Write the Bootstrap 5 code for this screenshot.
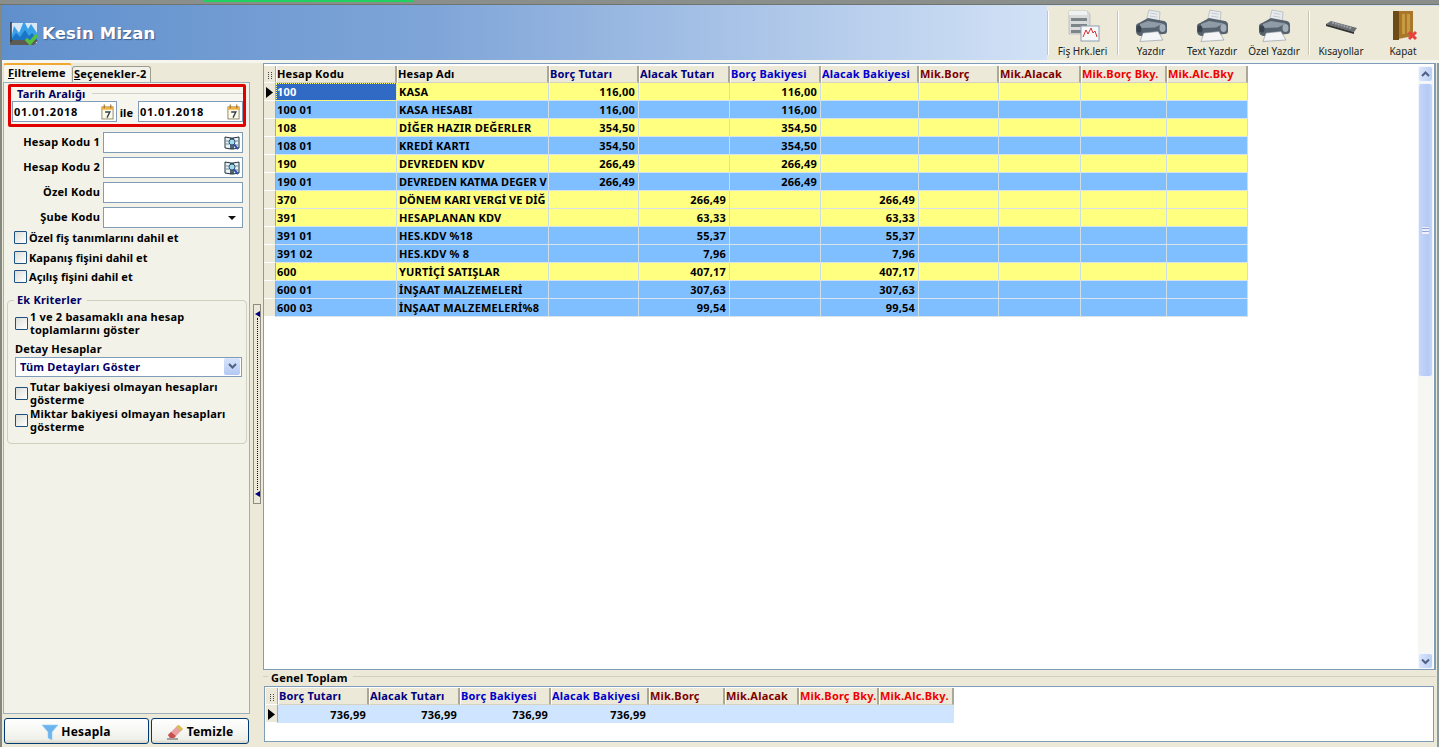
<!DOCTYPE html>
<html lang="tr">
<head>
    <meta charset="UTF-8">
    <meta name="viewport" content="width=device-width, initial-scale=1.0">
    <title>Kesin Mizan</title>
    <link rel="stylesheet" href="https://cdn.jsdelivr.net/npm/bootstrap@5.3.0/dist/css/bootstrap.min.css">
    <script src="https://cdn.jsdelivr.net/npm/bootstrap@5.3.0/dist/js/bootstrap.bundle.min.js" defer></script>
    <style>
        html, body { height: 747px; overflow: hidden; }
        body { background: #ece9d8; color: #000; font: 700 11px/13px "Noto Sans", "DejaVu Sans", sans-serif; letter-spacing: .2px; }
        .app-frame { border-left: 2px solid #84887e; }
        .win-top { height: 5px; background: #8b8f8b; border-bottom: 1px solid #6f7470; flex: none; margin-left: -2px; }
        .win-top i { display: block; width: 210px; height: 2px; margin-left: 203px; background: #20d060; }
        .title-band { height: 55px; flex: none; padding-left: 7px; background: linear-gradient(90deg, #6090cc 0%, #7fa5d8 30%, #d3e2f6 73%); }
        .title-text { color: #fff; font: 700 16.5px/22px "DejaVu Sans", sans-serif; letter-spacing: .2px; margin-left: 3px; margin-top: 3px; text-shadow: 1px 1px 1px #3c5f90; }
        .tool-bar { background: #ece9d8; margin: 1px 0 0; padding: 3px 6px 3px 0; font: 400 10px/12px "Noto Sans", sans-serif; letter-spacing: 0; color: #222; }
        .tool-item { text-align: center; white-space: nowrap; flex: none; }
        .tool-item svg { display: block; margin: 0 auto 3px; }
        .tool-sep { width: 1px; margin: 2px 0; background: #c8c5b2; box-shadow: 1px 0 0 #fff; flex: none; }
        .tool-w1 { width: 69px; }
        .tool-w2 { width: 66px; }
        .tool-w3 { width: 56px; }
        .tool-w4 { width: 68px; }
        .tool-w5 { width: 64px; }
        .tool-w6 { width: 60px; }
        .top-gap { height: 3px; background: #f6f6f0; flex: none; }
        .work-area { flex: 1 1 auto; min-height: 0; padding-left: 1px; border-right: 2px solid #8b9a9c; }
        .left-pane { width: 247px; flex: none; }
        .tab-strip { height: 19px; flex: none; border: 0; padding: 0; }
        .tab-strip .nav-link { font: 700 11px/14px "Noto Sans", sans-serif; color: #000; padding: 0 0 0 1px; border: 1px solid #9c9c90; border-bottom: 0; border-radius: 3px 3px 0 0; background: #f2f1e8; margin: 0; }
        .tab-strip .nav-link.active { height: 19px; width: 69px; border-top: 2px solid #f0a830; background: #f6f5ee; color: #000; text-align: left; padding: 1px 0 0 4px; }
        .tab-strip .nav-item + .nav-item .nav-link { margin-top: 3px; height: 16px; width: 79px; }
        .tab-page { height: 632px; flex: none; border: 1px solid #9cb0bc; background: #f3f2e9; padding: 1px 3px 0 4px; }
        .tab-page u, .tab-strip u { text-decoration: underline; }
        .date-box { border: 3px solid #e00000; margin: 0; background: #f6f5ee; height: 43px; padding: 0 0 0 1px; border-radius: 2px; }
        .group-title { color: #000066; white-space: nowrap; padding-left: 5px; height: 15px; line-height: 14px; margin-top: -1px; }
        .group-title::after { content: ""; flex: 1; margin-left: 6px; border-top: 1px solid #d0d0c4; }
        .fld { display: flex; align-items: center; background: #fff; border: 1px solid #7f9db9; height: 21px; padding-right: 2px; }
        .fld input { border: 0; outline: 0; min-width: 0; flex: 1; background: transparent; padding: 0 1px; font: inherit; color: #000; box-shadow: none; height: 19px; border-radius: 0; }
        .date-fld { width: 105px; flex: none; }
        .date-fld input { letter-spacing: .75px; }
        .ile-text { width: 21px; text-align: center; flex: none; padding-right: 2px; padding-top: 1px; }
        .form-line { height: 21px; margin-bottom: 4px; padding-right: 3px; }
        .form-line label { width: 95px; text-align: right; flex: none; padding-right: 3px; white-space: nowrap; margin-top: 3px; }
        .form-line .fld { flex: 1; }
        .form-first { margin-top: 5px; }
        .check-line { display: flex; align-items: center; gap: 2px; padding-left: 6px; margin: 0; line-height: 13px; }
        .check-line .form-check-input { width: 13px; height: 13px; margin: 0; border: 1px solid #1c5180; border-radius: 1px; background: linear-gradient(135deg, #dcdcd7, #fff); flex: none; box-shadow: none; }
        .check-list { margin-top: -4px; letter-spacing: .05px; }
        .check-list .check-line { height: 19.5px; }
        .extra-box { border: 1px solid #d0d0bf; border-radius: 4px; margin: 13px 0 0 -1px; height: 144px; width: 240px; padding: 9px 0 0 0; position: relative; }
        .extra-box .check-line { min-height: 27px; padding-left: 7px; }
        .extra-title { position: absolute; left: 6px; top: -8px; background: #f3f2e9; padding: 0 5px 0 3px; color: #000066; }
        .detail-label { padding-left: 7px; margin-top: 5px; }
        .detail-fld { margin: 2px 4px 3px 7px; height: 20px; color: #000066; padding: 0 1px 0 4px; justify-content: space-between; }
        .combo-btn { width: 16px; height: 17px; background: linear-gradient(180deg, #d8e4fb, #b3c8f2); border-radius: 2px; display: flex; align-items: center; justify-content: center; }
        .button-row { margin-top: 4px; height: 26px; gap: 2px; margin-left: 1px; }
        .act-btn { font: 700 12px/14px "Noto Sans", sans-serif; color: #000; height: 26px; padding: 1px 0 0; border: 1px solid #003c74; border-radius: 3px; background: linear-gradient(180deg, #fff, #f0f0ea 85%, #d8d4c6); display: flex; align-items: center; justify-content: center; gap: 3px; }
        .act-btn:hover { color: #000; border-color: #003c74; background: #fff; }
        .btn-hesapla { width: 145px; }
        .btn-temizle { width: 98px; }
        .split-col { width: 13px; flex: none; padding: 241px 2px 0 3px; }
        .split-handle { width: 8px; height: 200px; border: 1px solid #8c8c84; padding: 6px 0; align-items: center; justify-content: space-between; display: flex; flex-direction: column; background: #ece9d8; }
        .split-handle b { flex: 1; width: 0; border-left: 1px dotted #000066; margin: 1px 0; }
        .right-pane { width: 1173px; flex: none; }
        .grid-pane { height: 607px; flex: none; background: #fff; border: 1px solid #7f9db9; border-right-width: 2px; padding: 2px 1px 0 0; }
        .data-grid { table-layout: fixed; border-collapse: separate; border-spacing: 0; margin: 0; flex: none; font: 700 11px/13px "Noto Sans", sans-serif; letter-spacing: .2px; }
        .data-grid th, .data-grid td { padding: 0 2px; height: 18px; white-space: nowrap; overflow: hidden; box-shadow: none; vertical-align: middle; color: #000; background: none; border: 0; }
        .data-grid thead th { height: 17px; background: #ece9d8; border-right: 2px solid #aca899; border-left: 1px solid #fff; border-bottom: 1px solid #d6d2c2; padding: 0 0 1px; }
        .data-grid td { border-right: 1px solid #cfdde4; border-bottom: 1px solid #d9e4ea; }
        .data-grid td.cell-num { text-align: right; padding-right: 3px; }
        .data-grid td.cell-mark, .data-grid thead th.cell-mark { background: #ece9d8; border: 0; border-right: 1px solid #aca899; border-bottom: 1px solid #fff; padding: 0; text-align: center; }
        .data-grid td.cell-first { padding-left: 1px; }
        .data-grid td.cell-tight { letter-spacing: 0; }
        .row-y td { background: #ffff80; }
        .row-b td { background: #80bfff; }
        .row-t td { background: #cfe5ff; border: 0; }
        .data-grid td.cell-sel { background: #316ac5; color: #fff; outline: 1px dotted #ffff80; outline-offset: -1px; }
        .c-navy { color: #000080 !important; }
        .c-blue { color: #0000cd !important; }
        .c-maroon { color: #800000 !important; }
        .c-red { color: #f00000 !important; }
        .drag-dots { display: inline-block; width: 4px; height: 7px; border-left: 1px dotted #444; border-right: 1px dotted #444; }
        .v-scroll { width: 15px; flex: none; background: #f6f6f2; }
        .sb-btn { height: 16px; flex: none; background: linear-gradient(90deg, #dbe6fb, #bccff5); border: 1px solid #f4f7fe; border-radius: 3px; display: flex; align-items: center; justify-content: center; }
        .sb-thumb { height: 294px; flex: none; margin-top: 1px; background: linear-gradient(90deg, #c6d6f8, #b4c9f5 70%, #c6d6f8); border: 1px solid #f0f4fe; border-radius: 3px; display: flex; align-items: center; justify-content: center; }
        .sb-thumb span { width: 7px; height: 7px; border-top: 1px solid #eef; border-bottom: 1px solid #eef; background: linear-gradient(#8fa6d8 0 1px, #eef 1px 3px, #8fa6d8 3px 4px, #eef 4px); }
        .total-group { height: 72px; flex: none; position: relative; margin-top: 6px; border-top: 1px solid #d0d0bf; }
        .total-title { position: absolute; left: 5px; top: -6px; background: #ece9d8; padding: 0 5px 0 3px; line-height: 14px; }
        .total-pane { position: relative; height: 56px; margin-top: 9px; margin-left: 1px; margin-right: 2px; background: #fff; border: 1px solid #7f9db9; padding: 1px 0 0 1px; }
    </style>
</head>
<body>
<svg width="0" height="0" class="d-block">
    <defs>
        <symbol id="ic-print" viewBox="0 0 34 33">
            <path d="M15 1l11 2-1 12-13-2z" fill="#e8ecee" stroke="#a0a9b0" stroke-width=".6"/>
            <path d="M16.500 4l7 1.300M16 7l7.500 1.300" stroke="#b9c2c8" stroke-width=".8"/>
            <path d="M5 14l9-5 16 3c2 .5 3 2 3 4v6c0 2-1 3-3 3l-22 2c-4 0-6-2-6-5v-5c0-1.500 1-2.500 3-3z" fill="#56626e"/>
            <path d="M6 15l8-3 15 2.500-8 4-15 .500z" fill="#8f9ca7"/>
            <ellipse cx="28.500" cy="19" rx="3" ry="4" fill="#a3afb8"/>
            <ellipse cx="5" cy="20" rx="2.500" ry="3.500" fill="#39424b"/>
            <path d="M9 24l15-1.500 5 8.500-23 1.500z" fill="#f4f5f6" stroke="#8a949c" stroke-width=".6"/>
        </symbol>
        <symbol id="ic-book" viewBox="0 0 16 16">
            <path d="M1 2l6 1v11l-6-1zM15 2L9 3v11l6-1zM7 3h2v11H7z" fill="#eef2f2" stroke="#1c3440" stroke-width="1"/>
            <path d="M2 6h3M2 9h3M11 6h3M11 10h3" stroke="#6c8aa4" stroke-width="1"/>
            <circle cx="8" cy="7" r="3" fill="#a0dcec" stroke="#2c5070" stroke-width="1"/>
            <path d="M10 9.500l4 4.500" stroke="#3050b0" stroke-width="2"/>
        </symbol>
        <symbol id="ic-cal" viewBox="0 0 14 16">
            <rect x="1" y="2.500" width="12" height="13" fill="#fdfbe8" stroke="#8c8468"/>
            <rect x="1" y="2.500" width="12" height="3" fill="#f0b040"/>
            <path d="M3.500 0v4M10.500 0v4" stroke="#a07020" stroke-width="1.200"/>
            <path d="M4.500 8h5L6.500 14" fill="none" stroke="#304050" stroke-width="1.500"/>
        </symbol>
    </defs>
</svg>

<div class="app-frame d-flex flex-column vh-100">
    <div class="win-top"><i></i></div>

    <div class="title-band d-flex justify-content-between">
        <div class="d-flex align-items-center">
            <svg width="30" height="27" viewBox="0 0 30 27">
                <path d="M2 24V4h26v20z" fill="#dbe7f4"/>
                <path d="M2 20l3-13 5 7 5-12 4 8 3-5 6 9v6H2z" fill="#38a0e8"/>
                <path d="M2 21l5-7 4 4 5-7 4 6 3-3 5 6v3H2z" fill="#1c74c4"/>
                <path d="M1 21v5h24l4-5z" fill="#5c5c54"/>
                <path d="M2 3v20" stroke="#333" stroke-width="1.500"/>
                <path d="M17 20l4 4 7-8" fill="none" stroke="#58c040" stroke-width="3.500"/>
            </svg>
            <div class="title-text">Kesin Mizan</div>
        </div>
        <div class="tool-bar d-flex">
            <div class="tool-sep"></div>
            <div class="tool-item tool-w1">
                <svg width="34" height="33" viewBox="0 0 34 33">
                    <path d="M3 2h18l3 3v20H3z" fill="#d8dadc" stroke="#aab0b4" stroke-width=".6"/>
                    <path d="M3 2h18v4H3z" fill="#f0f1f2"/>
                    <path d="M5 9h16v3H5zM5 15h16v3H5zM5 21h16v3H5z" fill="#7c8488"/>
                    <rect x="15" y="17" width="18" height="15" fill="#f6f8fa" stroke="#8fa0b0"/>
                    <path d="M17 28l3-7 2 4 3-6 2 5 2-2 2 6" fill="none" stroke="#d83030"/>
                </svg>
                Fiş Hrk.leri
            </div>
            <div class="tool-sep"></div>
            <div class="tool-item tool-w2"><svg width="34" height="33"><use href="#ic-print"/></svg>Yazdır</div>
            <div class="tool-item tool-w3"><svg width="34" height="33"><use href="#ic-print"/></svg>Text Yazdır</div>
            <div class="tool-item tool-w4"><svg width="34" height="33"><use href="#ic-print"/></svg>Özel Yazdır</div>
            <div class="tool-sep"></div>
            <div class="tool-item tool-w5">
                <svg width="34" height="33" viewBox="0 0 34 33">
                    <path d="M2 15l5-3 26 7-3 4z" fill="#6a6e72"/>
                    <path d="M2 15l28 8v2L2 17z" fill="#303234"/>
                    <path d="M8 13.500l20 6" stroke="#a0a4a8" stroke-width="2" stroke-dasharray="2 1"/>
                </svg>
                Kısayollar
            </div>
            <div class="tool-item tool-w6">
                <svg width="34" height="33" viewBox="0 0 34 33">
                    <path d="M7 2h20v25l-20 4z" fill="#a87828"/>
                    <path d="M7 2h6v29H7z" fill="#6e4a14"/>
                    <path d="M16 5h3v20h-3zM21 5h3v19h-3z" fill="#c89a44"/>
                    <path d="M23 23l7 7M30 23l-7 7" stroke="#e84040" stroke-width="3"/>
                </svg>
                Kapat
            </div>
        </div>
    </div>
    <div class="top-gap"></div>

    <div class="work-area d-flex">
        <div class="left-pane d-flex flex-column">
            <ul class="nav nav-tabs tab-strip">
                <li class="nav-item"><a class="nav-link active" href="#"><u>F</u>iltreleme</a></li>
                <li class="nav-item"><a class="nav-link" href="#"><u>S</u>eçenekler-2</a></li>
            </ul>
            <div class="tab-page">
                <div class="date-box">
                    <div class="group-title d-flex align-items-center">Tarih Aralığı</div>
                    <div class="d-flex align-items-center">
                        <div class="fld date-fld"><input class="form-control" value="01.01.2018"><svg width="13" height="16"><use href="#ic-cal"/></svg></div>
                        <span class="ile-text">ile</span>
                        <div class="fld date-fld"><input class="form-control" value="01.01.2018"><svg width="13" height="16"><use href="#ic-cal"/></svg></div>
                    </div>
                </div>
                <div class="form-line form-first d-flex"><label>Hesap Kodu 1</label><div class="fld"><input class="form-control"><svg width="16" height="16"><use href="#ic-book"/></svg></div></div>
                <div class="form-line d-flex"><label>Hesap Kodu 2</label><div class="fld"><input class="form-control"><svg width="16" height="16"><use href="#ic-book"/></svg></div></div>
                <div class="form-line d-flex"><label>Özel Kodu</label><div class="fld"><input class="form-control"></div></div>
                <div class="form-line d-flex"><label>Şube Kodu</label><div class="fld"><input class="form-control"><svg width="16" height="8" viewBox="0 0 16 8"><path d="M4 2h8L8 6z" fill="#111"/></svg></div></div>
                <div class="check-list">
                    <label class="check-line"><input type="checkbox" class="form-check-input">Özel fiş tanımlarını dahil et</label>
                    <label class="check-line"><input type="checkbox" class="form-check-input">Kapanış fişini dahil et</label>
                    <label class="check-line"><input type="checkbox" class="form-check-input">Açılış fişini dahil et</label>
                </div>
                <div class="extra-box">
                    <span class="extra-title">Ek Kriterler</span>
                    <label class="check-line"><input type="checkbox" class="form-check-input"><span>1 ve 2 basamaklı ana hesap<br>toplamlarını göster</span></label>
                    <div class="detail-label">Detay Hesaplar</div>
                    <div class="fld detail-fld"><span>Tüm Detayları Göster</span><span class="combo-btn"><svg width="9" height="7" viewBox="0 0 9 7"><path d="M1 1l3.500 3.500L8 1" fill="none" stroke="#4d6185" stroke-width="2"/></svg></span></div>
                    <label class="check-line"><input type="checkbox" class="form-check-input"><span>Tutar bakiyesi olmayan hesapları<br>gösterme</span></label>
                    <label class="check-line"><input type="checkbox" class="form-check-input"><span>Miktar bakiyesi olmayan hesapları<br>gösterme</span></label>
                </div>
            </div>
            <div class="button-row d-flex">
                <a class="btn act-btn btn-hesapla" href="#">
                    <svg width="16" height="16" viewBox="0 0 16 16"><path d="M0 1h16L10 8v8l-4-2V8z" fill="#6cb4ee" stroke="#98d0f4" stroke-width=".6"/></svg>
                    Hesapla
                </a>
                <a class="btn act-btn btn-temizle" href="#">
                    <svg width="17" height="16" viewBox="0 0 17 16"><path d="M1 11L11 1l5 4-9 9H3z" fill="#e8a0a0"/><path d="M9 3l5 4 2-2-4-4z" fill="#d8c050"/><path d="M1 11l2 3h4l2-2-5-4z" fill="#c85050"/><path d="M0 15h11" stroke="#555"/></svg>
                    Temizle
                </a>
            </div>
        </div>

        <div class="split-col">
            <div class="split-handle">
                <svg width="5" height="6" viewBox="0 0 5 6"><path d="M5 0v6L0 3z" fill="#000080"/></svg>
                <b></b>
                <svg width="5" height="6" viewBox="0 0 5 6"><path d="M5 0v6L0 3z" fill="#000080"/></svg>
            </div>
        </div>

        <div class="right-pane d-flex flex-column">
            <div class="grid-pane d-flex justify-content-between">
                <table class="table data-grid align-self-start" id="main-grid"></table>
                <div class="v-scroll d-flex flex-column">
                    <div class="sb-btn"><svg width="9" height="7" viewBox="0 0 9 7"><path d="M1 5l3.500-3.500L8 5" fill="none" stroke="#4d6185" stroke-width="2"/></svg></div>
                    <div class="sb-thumb"><span></span></div>
                    <div class="flex-grow-1"></div>
                    <div class="sb-btn"><svg width="9" height="7" viewBox="0 0 9 7"><path d="M1 1.500L4.500 5 8 1.500" fill="none" stroke="#4d6185" stroke-width="2"/></svg></div>
                </div>
            </div>
            <div class="total-group">
                <span class="total-title">Genel Toplam</span>
                <div class="total-pane">
                    <table class="table data-grid" id="total-grid"></table>
                </div>
            </div>
        </div>
    </div>
</div>

<script>
    document.addEventListener("DOMContentLoaded", function () {
        const mainCols = [
            { name: "Hesap Kodu", w: 121 }, { name: "Hesap Adı", w: 152 },
            { name: "Borç Tutarı", w: 90, cls: "c-navy", num: 1 }, { name: "Alacak Tutarı", w: 91, cls: "c-navy", num: 1 },
            { name: "Borç Bakiyesi", w: 91, cls: "c-blue", num: 1 }, { name: "Alacak Bakiyesi", w: 98, cls: "c-blue", num: 1 },
            { name: "Mik.Borç", w: 80, cls: "c-maroon" }, { name: "Mik.Alacak", w: 82, cls: "c-maroon" },
            { name: "Mik.Borç Bky.", w: 86, cls: "c-red" }, { name: "Mik.Alc.Bky", w: 81, cls: "c-red" }
        ];
        const rows = [
            ["y", "100", "KASA", "116,00", "", "116,00", ""],
            ["b", "100 01", "KASA HESABI", "116,00", "", "116,00", ""],
            ["y", "108", "DİĞER HAZIR DEĞERLER", "354,50", "", "354,50", ""],
            ["b", "108 01", "KREDİ KARTI", "354,50", "", "354,50", ""],
            ["y", "190", "DEVREDEN KDV", "266,49", "", "266,49", ""],
            ["b", "190 01", "DEVREDEN KATMA DEGER V", "266,49", "", "266,49", ""],
            ["y", "370", "DÖNEM KARI VERGİ VE DİĞ", "", "266,49", "", "266,49"],
            ["y", "391", "HESAPLANAN KDV", "", "63,33", "", "63,33"],
            ["b", "391 01", "HES.KDV %18", "", "55,37", "", "55,37"],
            ["b", "391 02", "HES.KDV % 8", "", "7,96", "", "7,96"],
            ["y", "600", "YURTİÇİ SATIŞLAR", "", "407,17", "", "407,17"],
            ["b", "600 01", "İNŞAAT MALZEMELERİ", "", "307,63", "", "307,63"],
            ["b", "600 03", "İNŞAAT MALZEMELERİ%8", "", "99,54", "", "99,54"]
        ];
        const totalCols = [
            { name: "Borç Tutarı", w: 91, cls: "c-navy", num: 1 }, { name: "Alacak Tutarı", w: 91, cls: "c-navy", num: 1 },
            { name: "Borç Bakiyesi", w: 91, cls: "c-blue", num: 1 }, { name: "Alacak Bakiyesi", w: 98, cls: "c-blue", num: 1 },
            { name: "Mik.Borç", w: 76, cls: "c-maroon" }, { name: "Mik.Alacak", w: 74, cls: "c-maroon" },
            { name: "Mik.Borç Bky.", w: 80, cls: "c-red" }, { name: "Mik.Alc.Bky.", w: 75, cls: "c-red" }
        ];
        const arrow = '<svg width="7" height="11" viewBox="0 0 7 11"><path d="M0 0l7 5.500L0 11z" fill="#000"/></svg>';

        function headHtml(cols) {
            let html = '<thead><tr><th class="cell-mark" style="width:12px"><span class="drag-dots"></span></th>';
            cols.forEach(col => {
                html += `<th class="${col.cls || ""}" style="width:${col.w}px">${col.name}</th>`;
            });
            return html + "</tr></thead>";
        }

        function setWidth(table, cols) {
            table.style.width = cols.reduce((total, col) => total + col.w, 12) + "px";
        }

        const mainGrid = document.getElementById("main-grid");
        const totalGrid = document.getElementById("total-grid");

        let mainHtml = headHtml(mainCols) + "<tbody>";
        rows.forEach((row, i) => {
            mainHtml += `<tr class="row-${row[0]}"><td class="cell-mark">${i === 0 ? arrow : ""}</td>`;
            mainCols.forEach((col, c) => {
                const text = row[c + 1] || "";
                const sel = i === 0 && c === 0 ? "cell-sel" : "";
                const first = c === 0 ? "cell-first" : "";
                // uzun hesap adlari sutuna sigsin
                const tight = text.length > 21 ? "cell-tight" : "";
                mainHtml += `<td class="${col.num ? "cell-num" : ""} ${first} ${sel} ${tight}">${text}</td>`;
            });
            mainHtml += "</tr>";
        });
        mainGrid.innerHTML = mainHtml + "</tbody>";
        setWidth(mainGrid, mainCols);

        let totalHtml = headHtml(totalCols) + `<tbody><tr class="row-t"><td class="cell-mark">${arrow}</td>`;
        totalCols.forEach(col => {
            totalHtml += `<td class="${col.num ? "cell-num" : ""}">${col.num ? "736,99" : ""}</td>`;
        });
        totalGrid.innerHTML = totalHtml + "</tr></tbody>";
        setWidth(totalGrid, totalCols);
    });
</script>
</body>
</html>
